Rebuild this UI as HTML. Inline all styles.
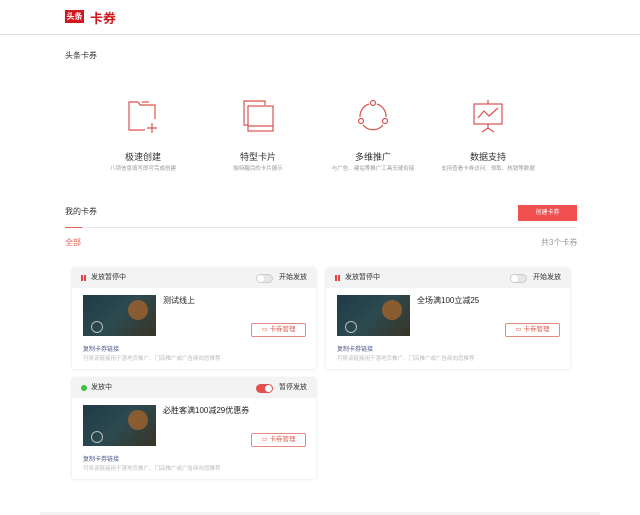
<!DOCTYPE html>
<html><head><meta charset="utf-8"><style>
*{margin:0;padding:0;box-sizing:border-box}
body{width:640px;height:515px;background:#fff;font-family:"Liberation Sans","Noto Sans CJK SC",sans-serif;position:relative;overflow:hidden;color:#333}
.a{position:absolute}
.hdr{left:0;top:0;width:640px;height:35px;border-bottom:1px solid #ddd;background:#fff}
.logo{left:65px;top:10px;width:19px;height:13px;background:#d0191f;color:#fff;font-size:8px;line-height:13px;text-align:center;font-weight:bold}
.brand{left:90px;top:8px;font-size:13px;font-weight:bold;color:#d0191f}
.t8{font-size:8px}
.feat{width:120px;text-align:center}
.feat b{display:block;font-size:9px;font-weight:normal;color:#333}
.feat i{display:block;font-style:normal;font-size:5.5px;color:#999;margin-top:1px}
.card{width:244px;height:101px;background:#fff;box-shadow:0 0 3px rgba(0,0,0,.13);border-radius:3px;overflow:hidden}
.ch{height:20px;background:#f3f3f3;position:relative;font-size:7px;line-height:20px;color:#333}
.img{position:absolute;left:11px;top:27px;width:73px;height:41px;background:linear-gradient(135deg,#1f3a44,#2c4a50 50%,#3a3325);overflow:hidden}
.img:after{content:"";position:absolute;left:45px;top:5px;width:20px;height:20px;border-radius:50%;background:#a0622c;opacity:.8}
.img:before{content:"";position:absolute;left:8px;top:26px;width:10px;height:10px;border-radius:50%;border:1px solid #bbb}
.ttl{position:absolute;left:91px;top:27px;font-size:8px;color:#222}
.btn{position:absolute;left:179px;top:55px;width:55px;height:14px;border:1px solid #e08a80;border-radius:2px;font-size:6.5px;color:#e06050;line-height:12px;text-align:center}
.lk{position:absolute;left:11px;top:76px;font-size:6px;color:#4a5a8a}
.ds{position:absolute;left:11px;top:86px;font-size:5.5px;color:#bbb}
.tg{position:absolute;top:6px;width:17px;height:9px;border-radius:5px}
.pz{position:absolute;left:9px;top:7px;width:5px;height:6px;border-left:2px solid #e04040;border-right:2px solid #e04040}
</style></head><body>
<div class="a hdr"></div>
<div class="a logo">头条</div>
<div class="a brand">卡券</div>
<div class="a t8" style="left:65px;top:50px;color:#333">头条卡券</div>

<svg class="a" style="left:125px;top:98px" width="36" height="36" viewBox="0 0 36 36" fill="none" stroke="#d9534f" stroke-width="1.2"><path d="M20 32H4V4h9l2 3h15v14"/><path d="M17 4h7"/><path d="M27 25v10M22 30h10"/></svg>
<svg class="a" style="left:240px;top:98px" width="36" height="36" viewBox="0 0 36 36" fill="none" stroke="#d9534f" stroke-width="1.2"><path d="M25 7V3H4v24h4"/><rect x="8" y="8" width="25" height="25"/><path d="M8 28h25"/></svg>
<svg class="a" style="left:355px;top:98px" width="36" height="36" viewBox="0 0 36 36" fill="none" stroke="#d9534f" stroke-width="1.2"><circle cx="18" cy="5" r="2.5"/><circle cx="6" cy="23" r="2.5"/><circle cx="30" cy="23" r="2.5"/><path d="M14 6A13 13 0 0 0 5 19M22 6a13 13 0 0 1 9 13M8 27a13 13 0 0 0 20 0"/></svg>
<svg class="a" style="left:470px;top:98px" width="36" height="36" viewBox="0 0 36 36" fill="none" stroke="#d9534f" stroke-width="1.2"><rect x="4" y="6" width="28" height="20"/><path d="M18 2v4M8 20l6-7 5 5 9-8M18 26v4M12 34l6-4 6 4"/></svg>

<div class="a feat" style="left:83px;top:150px"><b>极速创建</b><i>八项信息填写即可完成创建</i></div>
<div class="a feat" style="left:198px;top:150px"><b>特型卡片</b><i>独特醒目的卡片展示</i></div>
<div class="a feat" style="left:313px;top:150px"><b>多维推广</b><i>与广告、建站等推广工具无缝衔接</i></div>
<div class="a feat" style="left:428px;top:150px"><b>数据支持</b><i>支持查看卡券访问、领取、核销等数据</i></div>

<div class="a t8" style="left:65px;top:206px;color:#333">我的卡券</div>
<div class="a" style="left:518px;top:205px;width:59px;height:16px;background:#f05050;color:#fff;font-size:6px;line-height:16px;text-align:center">创建卡券</div>
<div class="a" style="left:65px;top:227px;width:512px;height:1px;background:#e6e6e6"></div>
<div class="a" style="left:65px;top:227px;width:17px;height:1px;background:#e06050"></div>
<div class="a t8" style="left:65px;top:237px;color:#e06050">全部</div>
<div class="a t8" style="left:541px;top:237px;color:#999">共3个卡券</div>

<div class="a card" style="left:72px;top:268px">
<div class="ch"><span class="pz"></span><span style="position:absolute;left:19px">发放暂停中</span><div class="tg" style="left:184px;background:#e6e6e6;border:1px solid #ccc"><div style="width:7px;height:7px;border-radius:50%;background:#fff"></div></div><span style="position:absolute;left:207px">开始发放</span></div>
<div class="img"></div><div class="ttl">测试线上</div><div class="btn">▭ 卡券管理</div>
<div class="lk">复制卡券链接</div><div class="ds">可将该链接用于落地页推广、门店推广或广告商向您推荐</div></div>

<div class="a card" style="left:326px;top:268px">
<div class="ch"><span class="pz"></span><span style="position:absolute;left:19px">发放暂停中</span><div class="tg" style="left:184px;background:#e6e6e6;border:1px solid #ccc"><div style="width:7px;height:7px;border-radius:50%;background:#fff"></div></div><span style="position:absolute;left:207px">开始发放</span></div>
<div class="img"></div><div class="ttl">全场满100立减25</div><div class="btn">▭ 卡券管理</div>
<div class="lk">复制卡券链接</div><div class="ds">可将该链接用于落地页推广、门店推广或广告商向您推荐</div></div>

<div class="a card" style="left:72px;top:378px">
<div class="ch"><span style="position:absolute;left:9px;top:7px;width:6px;height:6px;border-radius:50%;background:#3cc03c"></span><span style="position:absolute;left:19px">发放中</span><div class="tg" style="left:184px;background:#e05050"><div style="width:7px;height:7px;border-radius:50%;background:#fff;margin:1px 0 0 9px"></div></div><span style="position:absolute;left:207px">暂停发放</span></div>
<div class="img"></div><div class="ttl">必胜客满100减29优惠券</div><div class="btn">▭ 卡券管理</div>
<div class="lk">复制卡券链接</div><div class="ds">可将该链接用于落地页推广、门店推广或广告商向您推荐</div></div>

<div class="a" style="left:40px;top:512px;width:560px;height:3px;background:#f2f2f2"></div>
</body></html>
